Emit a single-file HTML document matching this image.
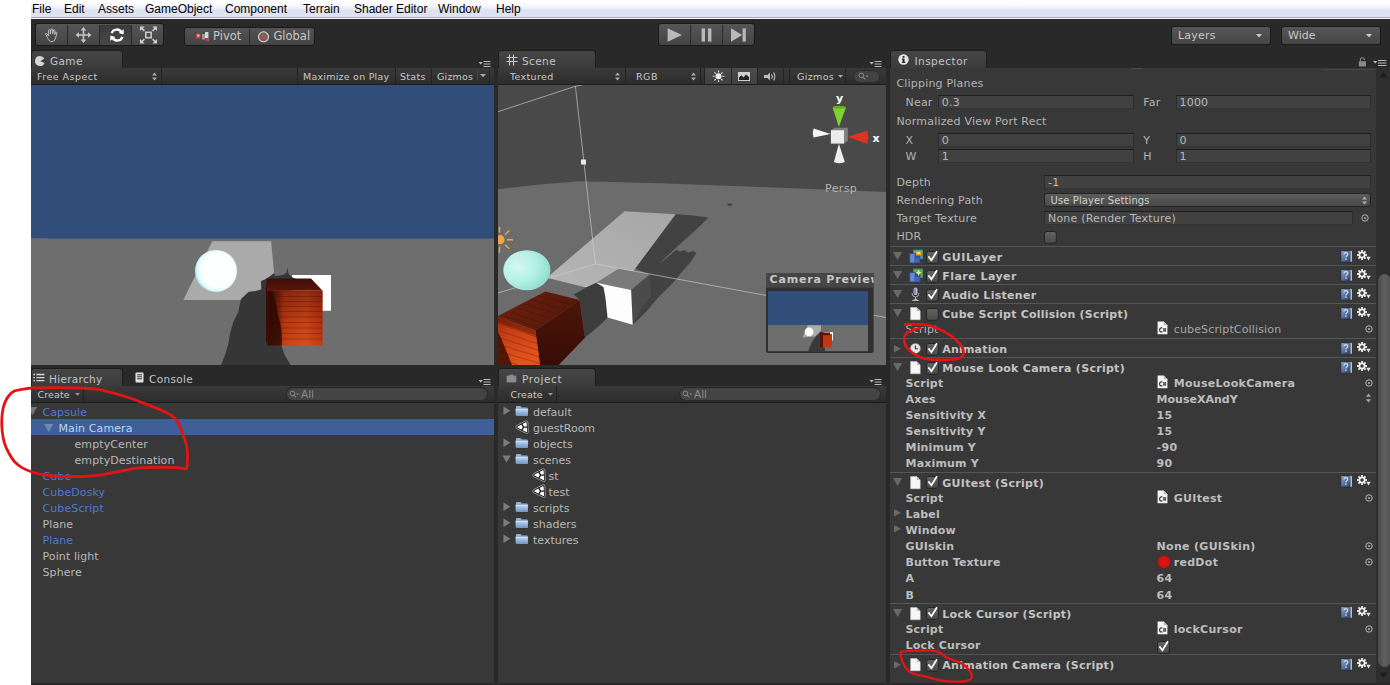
<!DOCTYPE html>
<html lang="en">
<head>
<meta charset="utf-8">
<title>Unity Editor</title>
<style>
*{box-sizing:border-box;margin:0;padding:0}
html,body{width:1390px;height:685px;overflow:hidden;background:#fff}
body{position:relative;font-family:"DejaVu Sans","Liberation Sans",sans-serif;font-size:11px;color:#b4b4b4;line-height:1}
.abs,.abs *{position:absolute}
.abs{position:absolute}
span.t,div.t{position:absolute;white-space:nowrap;line-height:16px;height:16px}
#insp>span.t{margin-top:1px}
#hier>span.t,#proj>span.t{margin-top:2px}
#insp>span.tt,#hier>span.tt,#proj>span.tt{margin-top:0}
#menubar{position:absolute;left:31px;top:0;width:1359px;height:19px;z-index:5;background:linear-gradient(#ffffff 0px,#fbfbfe 4px,#eef0f8 8px,#dee2f0 10px,#dfe3f1 16.5px,#a4a8ba 17px,#a4a8ba 18px,#f6f7fb 18px,#f6f7fb 19px);font-family:"Liberation Sans",sans-serif;font-size:12px;color:#000}
#menubar span{position:absolute;top:2px;line-height:15px;white-space:nowrap}
#unity{position:absolute;left:31px;top:18px;width:1359px;height:667px;background:#292929}
/* generic panel */
.panel{position:absolute;background:#383838}
.tab{position:absolute;margin-top:-1px;height:19px;background:linear-gradient(#454545,#3b3b3b);border:1px solid #1e1e1e;border-bottom:none;border-radius:3px 3px 0 0;color:#c4c4c4;font-size:11.5px}
.tab.inactive{background:none;border-color:transparent}
.ptool{position:absolute;height:17px;background:linear-gradient(#3a3a3a,#2c2c2c);border-bottom:1px solid #1c1c1c;font-size:9.5px;color:#c8c8c8}
.ptool .t{line-height:15px;height:15px;top:1px}
.vsep{position:absolute;width:1px;top:0;height:16px;background:#232323}
.btn{position:absolute;background:linear-gradient(#555,#424242);border:1px solid #1a1a1a;border-radius:3px}
.field{position:absolute;height:14px;background:#414141;border:1px solid #2c2c2c;border-top:1px solid #1e1e1e;border-bottom-color:#343434;color:#b8b8b8;font-size:11px}
.field span{position:absolute;left:3px;top:0;line-height:14px;white-space:nowrap;letter-spacing:.2px}
.sepline{position:absolute;left:0;height:1px;background:#555}
.b{font-weight:bold}
</style>
</head>
<body>
<div id="menubar">
<span style="left:1px">File</span>
<span style="left:33px">Edit</span>
<span style="left:67px">Assets</span>
<span style="left:114px">GameObject</span>
<span style="left:194px">Component</span>
<span style="left:272px">Terrain</span>
<span style="left:323px">Shader Editor</span>
<span style="left:407px">Window</span>
<span style="left:465px">Help</span>
</div>
<div id="unity">
<!--TOPBAR-->
<div class="abs" id="topbar" style="left:0;top:0;width:1359px;height:33px">
 <div class="btn" style="left:4px;top:5px;width:129px;height:23px;background:linear-gradient(#565656,#444)"></div>
 <div style="left:68px;top:7px;width:32px;height:20px;background:linear-gradient(#3a3a3a,#484848)"></div>
 <div style="left:36px;top:7px;width:1px;height:20px;background:#2a2a2a"></div>
 <div style="left:68px;top:7px;width:1px;height:20px;background:#2a2a2a"></div>
 <div style="left:100px;top:7px;width:1px;height:20px;background:#2a2a2a"></div>
 <svg style="left:5px;top:6px" width="127" height="22" viewBox="0 0 127 22" fill="none" stroke="#c8c8c8" stroke-width="1.2">
  <!-- hand -->
  <path d="M11.5 13.5 L9.6 10.2 Q9.4 8.9 10.8 9.6 L12.6 12 L12.6 6.2 Q13.4 5 14.2 6.2 L14.4 10 L15 5.2 Q15.9 4.2 16.6 5.4 L16.6 10 L17.6 6 Q18.6 5.2 19 6.6 L18.6 10.6 L19.8 8.2 Q20.9 7.8 20.8 9.2 L19.6 14 Q19 17.6 16 17.6 Q12.6 17.6 11.5 13.5 Z" stroke="#bdbdbd" stroke-width="1"/>
  <!-- move -->
  <g stroke="#c4c4c4" stroke-width="1.6"><path d="M47.5 5.5 V16.5 M42 11 H53"/></g>
  <g fill="#c4c4c4" stroke="none"><path d="M47.5 3 L50.3 6.4 H44.7 Z M47.5 19 L50.3 15.6 H44.7 Z M39.5 11 L43 8.2 V13.8 Z M55.5 11 L52 8.2 V13.8 Z"/></g>
  <!-- rotate -->
  <g stroke="#ffffff" stroke-width="2.3"><path d="M75.6 9.2 A5.4 5.4 0 0 1 85.4 8.2"/><path d="M86.4 12.8 A5.4 5.4 0 0 1 76.6 13.8"/></g>
  <g fill="#ffffff" stroke="none"><path d="M87.8 5.2 L87.6 10.4 L82.6 9 Z M74.2 16.8 L74.4 11.6 L79.4 13 Z"/></g>
  <!-- scale -->
  <g stroke="#cfcfcf" stroke-width="1.5"><rect x="109.8" y="8.3" width="5.4" height="5.4"/><path d="M105 3.5 L108.4 6.9 M120 3.5 L116.6 6.9 M105 18.5 L108.4 15.1 M120 18.5 L116.6 15.1"/></g>
  <g fill="#cfcfcf" stroke="none"><path d="M104 2.5 H108.6 L104 7.1 Z M121 2.5 H116.4 L121 7.1 Z M104 19.5 H108.6 L104 14.9 Z M121 19.5 H116.4 L121 14.9 Z"/></g>
 </svg>
 <!-- pivot/global -->
 <div class="btn" style="left:153px;top:9px;width:131px;height:19px;background:linear-gradient(#535353,#444)"></div>
 <div style="left:218px;top:11px;width:1px;height:16px;background:#2c2c2c"></div>
 <svg style="left:154px;top:10px" width="129" height="18" viewBox="0 0 129 18">
  <rect x="11" y="5.5" width="4.5" height="5" fill="#c74450"/><rect x="12.3" y="6.6" width="2" height="2" fill="#f4c8c8"/>
  <rect x="17" y="6" width="3" height="5.5" fill="#9a9a9a"/>
  <rect x="20" y="4" width="3.4" height="9" fill="#d8d8d8"/><rect x="20" y="10" width="3.4" height="3.2" fill="#d0303c"/>
  <circle cx="78.5" cy="8.8" r="5" fill="#6a6a6a" stroke="#d9d9d9" stroke-width="1.1"/><path d="M76.6 5.6 V11.6 H81" stroke="#d23a3a" stroke-width="1.5" fill="none"/><circle cx="79" cy="8.4" r="1.6" fill="#c84848"/>
 </svg>
 <span class="t" style="left:182px;top:10px;font-size:11.5px;color:#c6c6c6;line-height:17px">Pivot</span>
 <span class="t" style="left:242.4px;top:10px;font-size:11.5px;color:#c6c6c6;line-height:17px">Global</span>
 <!-- play -->
 <div class="btn" style="left:627px;top:5px;width:97px;height:23px;background:linear-gradient(#565656,#444)"></div>
 <div style="left:659px;top:7px;width:1px;height:20px;background:#2c2c2c"></div>
 <div style="left:691px;top:7px;width:1px;height:20px;background:#2c2c2c"></div>
 <svg style="left:628px;top:6px" width="95" height="22" viewBox="0 0 95 22" fill="#b9b9b9">
  <path d="M8.6 4.2 L23 11 L8.6 17.8 Z"/>
  <rect x="42.6" y="4.4" width="3.4" height="13.2"/><rect x="49" y="4.4" width="3.4" height="13.2"/>
  <path d="M72 4.2 L83.2 11 L72 17.8 Z"/><rect x="83.6" y="4.4" width="3.2" height="13.2"/>
 </svg>
 <!-- layers / wide -->
 <div class="btn" style="left:1140px;top:8px;width:100px;height:19px;background:linear-gradient(#565656,#454545);border-radius:3px"></div>
 <span class="t" style="left:1147px;top:10px;font-size:11px;color:#c8c8c8;line-height:16px;letter-spacing:.2px">Layers</span>
 <svg style="left:1225px;top:16px" width="7" height="4"><path d="M0 0 H6 L3 3.4 Z" fill="#c8c8c8"/></svg>
 <div class="btn" style="left:1250px;top:8px;width:100px;height:19px;background:linear-gradient(#565656,#454545);border-radius:3px"></div>
 <span class="t" style="left:1257px;top:10px;font-size:11px;color:#c8c8c8;line-height:16px;letter-spacing:0px">Wide</span>
 <svg style="left:1335px;top:16px" width="7" height="4"><path d="M0 0 H6 L3 3.4 Z" fill="#c8c8c8"/></svg>
</div>
<!--GAME-->
<div class="abs" id="game" style="left:0;top:33px;width:463px;height:314px">
 <div class="tab" style="left:0;top:0;width:92px"></div>
 <svg style="left:3px;top:3.5px" width="12" height="12" viewBox="0 0 12 12"><path d="M6 1 A5 5 0 1 0 10.6 8 L6.4 6.2 L10.4 3.6 A5 5 0 0 0 6 1 Z" fill="#d6d6d6"/></svg>
 <span class="t tt" style="left:19px;top:2px;font-size:10.5px;color:#c4c4c4;letter-spacing:0.4px">Game</span>
 <svg style="left:447px;top:9.6px" width="14" height="7" viewBox="0 0 13 7"><path d="M0 1 H4.4 L2.2 3.6 Z" fill="#bbb"/><path d="M5 .5 H12 M5 3 H12 M5 5.5 H12" stroke="#bbb" stroke-width="1"/></svg>
 <div class="ptool" style="left:0;top:17px;width:463px">
  <span class="t" style="left:6px;letter-spacing:.48px">Free Aspect</span>
  <svg style="left:121px;top:4px" width="5" height="9" viewBox="0 0 5 9" fill="#aaa"><path d="M0 3.4 L2.5 .4 L5 3.4 Z M0 5.4 L2.5 8.4 L5 5.4 Z"/></svg>
  <div class="vsep" style="left:130px"></div>
  <div class="vsep" style="left:266px"></div>
  <span class="t" style="left:272px;letter-spacing:.23px">Maximize on Play</span>
  <div class="vsep" style="left:364px"></div>
  <span class="t" style="left:369px;letter-spacing:.3px">Stats</span>
  <div class="vsep" style="left:400px"></div>
  <span class="t" style="left:406px;letter-spacing:.2px">Gizmos</span>
  <div class="vsep" style="left:446px;background:#4a4a4a;top:3px;height:9px"></div>
  <svg style="left:449px;top:6px" width="7" height="4"><path d="M0 0 H6 L3 3.2 Z" fill="#aaa"/></svg>
  <div class="vsep" style="left:458px"></div>
 </div>
 <svg style="left:0;top:34px" width="463" height="280" viewBox="31 85 463 280">
  <defs>
   <radialGradient id="gsph" cx=".55" cy=".48" r=".55"><stop offset="0" stop-color="#fff"/><stop offset=".72" stop-color="#fdffff"/><stop offset=".9" stop-color="#dffafa"/><stop offset="1" stop-color="#a8ecec"/></radialGradient>
   <linearGradient id="gcf" x1="0" x2="1" y1="0" y2="0"><stop offset="0" stop-color="#4e1206"/><stop offset=".18" stop-color="#7c1e0a"/><stop offset=".3" stop-color="#c23a12"/><stop offset=".7" stop-color="#d4481a"/><stop offset="1" stop-color="#b8300e"/></linearGradient>
   <linearGradient id="gcv" x1="0" x2="0" y1="0" y2="1"><stop offset="0" stop-color="#3a0c04" stop-opacity=".45"/><stop offset=".55" stop-color="#3a0c04" stop-opacity=".1"/><stop offset="1" stop-color="#ff7a30" stop-opacity=".12"/></linearGradient>
   <linearGradient id="gct" x1="0" x2="0" y1="0" y2="1"><stop offset="0" stop-color="#3c0d08"/><stop offset="1" stop-color="#5e150a"/></linearGradient>
  </defs>
  <rect x="31" y="85" width="463" height="154" fill="#314d7a"/>
  <rect x="31" y="238.6" width="463" height="127" fill="#6e6e6e"/>
  <path d="M31 238.6 L50 238.6 L31 240.4 Z" fill="#6e6e6e"/>
  <path d="M212.3 241.2 H271.1 L274.4 276 L266 279 L260 300 H183.3 Z" fill="#aaaaaa"/>
  <rect x="292" y="275" width="39" height="35.8" fill="#ffffff"/>
  <!-- shadow -->
  <path d="M274.2 273 L275.2 276 L283 275 L286.6 272.6 L287.5 267.4 L288.5 274 L292.6 277.4 L296 279 L266 279 L260.9 281 L261.3 289.3 L255.8 290.9 L248.7 291.7 L241.5 298.5 L240.5 300.5 L238.4 311.7 L233.3 322 L230.3 332.2 L228.2 344.4 L225.2 354.6 L221 365 L290.6 365 L284.4 354.6 L281.4 345.4 L268 338 L268 300 L266 279 Z" fill="#363636"/>
  <!-- cube -->
  <path d="M266 278.4 H311 L322.6 290.7 H267.5 Z" fill="url(#gct)"/>
  <path d="M266 278.4 L267.5 290.7 V345.4 L266 341 Z" fill="#3a0c05"/>
  <rect x="267.5" y="290.7" width="55.1" height="54.7" fill="url(#gcf)"/>
  <g stroke="#5a1406" stroke-width=".7" opacity=".55"><path d="M268 296.5 H322 M268 301.5 H322 M268 306.5 H322 M268 311.5 H322 M268 317 H322 M268 322.5 H322 M268 328 H322 M268 333.5 H322 M268 339 H322"/></g>
  <rect x="267.5" y="290.7" width="55.1" height="54.7" fill="url(#gcv)"/>
  <path d="M267.5 290.7 H272.6 L275.4 300 L277.4 312 L280 322 L281.6 332 L281.8 345.4 H267.5 Z" fill="#2a0903" opacity=".8"/>
  <circle cx="216" cy="270.9" r="21" fill="url(#gsph)"/>
 </svg>
</div>
<!--SCENE-->
<div class="abs" id="scene" style="left:467px;top:33px;width:388px;height:314px">
 <div class="tab" style="left:0;top:0;width:98px"></div>
 <svg style="left:8px;top:3px" width="12" height="12" viewBox="0 0 12 12"><path d="M3.5 .5 V11.5 M7.5 .5 V11.5 M.5 3.5 H11.5 M.5 7.5 H11.5" stroke="#c8c8c8" stroke-width="1.1" fill="none"/></svg>
 <span class="t tt" style="left:24px;top:2px;font-size:10.5px;color:#c4c4c4;letter-spacing:0.4px">Scene</span>
 <svg style="left:371px;top:9.6px" width="14" height="7" viewBox="0 0 13 7"><path d="M0 1 H4.4 L2.2 3.6 Z" fill="#bbb"/><path d="M5 .5 H12 M5 3 H12 M5 5.5 H12" stroke="#bbb" stroke-width="1"/></svg>
 <div class="ptool" style="left:0;top:17px;width:388px">
  <span class="t" style="left:12px;letter-spacing:.35px">Textured</span>
  <svg style="left:117px;top:4px" width="5" height="9" viewBox="0 0 5 9" fill="#aaa"><path d="M0 3.4 L2.5 .4 L5 3.4 Z M0 5.4 L2.5 8.4 L5 5.4 Z"/></svg>
  <div class="vsep" style="left:127px"></div>
  <span class="t" style="left:138px;letter-spacing:.5px">RGB</span>
  <svg style="left:193px;top:4px" width="5" height="9" viewBox="0 0 5 9" fill="#aaa"><path d="M0 3.4 L2.5 .4 L5 3.4 Z M0 5.4 L2.5 8.4 L5 5.4 Z"/></svg>
  <div class="vsep" style="left:202px"></div>
  <div style="left:207px;top:0;width:52px;height:16px;background:linear-gradient(#4b4b4b,#404040)"></div>
  <div class="vsep" style="left:206px"></div>
  <div class="vsep" style="left:233px"></div>
  <div class="vsep" style="left:259px"></div>
  <div class="vsep" style="left:285px"></div>
  <div class="vsep" style="left:291px"></div>
  <svg style="left:207px;top:0" width="80" height="16" viewBox="0 0 80 16">
   <circle cx="13.5" cy="8.3" r="3" fill="#f0f0f0"/>
   <g stroke="#f0f0f0" stroke-width="1.1"><path d="M13.5 2.6 V4.4 M13.5 12.2 V14 M7.8 8.3 H9.6 M17.4 8.3 H19.2 M9.5 4.3 L10.8 5.6 M16.2 11 L17.5 12.3 M17.5 4.3 L16.2 5.6 M10.8 11 L9.5 12.3"/></g>
   <rect x="33" y="4" width="12" height="9" fill="#cfcfcf"/><path d="M34 12 V9.6 L36.4 7.2 L38.6 9.4 L41 6.6 L44 9 V12 Z" fill="#222"/>
   <path d="M59 7 L62.6 7 L65 4.6 V12.4 L62.6 10 L59 10 Z" fill="#bdbdbd"/><path d="M66.6 6.2 Q68.2 8.5 66.6 10.8 M68.6 4.6 Q71.2 8.5 68.6 12.4" stroke="#bdbdbd" stroke-width="1.1" fill="none"/>
  </svg>
  <span class="t" style="left:299px;letter-spacing:.35px">Gizmos</span>
  <svg style="left:340px;top:7px" width="6" height="4"><path d="M0 0 H5 L2.5 2.8 Z" fill="#aaa"/></svg>
  <div class="vsep" style="left:347px"></div>
  <div style="left:355px;top:2px;width:27px;height:13px;border-radius:7px;background:#424242;border:1px solid #2a2a2a"></div>
  <svg style="left:360px;top:4px" width="12" height="9" viewBox="0 0 12 9"><circle cx="3.4" cy="3.4" r="2.3" stroke="#8a8a8a" stroke-width="1" fill="none"/><path d="M5 5 L7 7.4" stroke="#8a8a8a" stroke-width="1.1"/><path d="M7.6 3.4 H10.6 L9.1 5.2 Z" fill="#8a8a8a"/></svg>
 </div>
 <svg style="left:0;top:34px" width="388" height="280" viewBox="498 85 388 280" font-family="DejaVu Sans, Liberation Sans, sans-serif">
  <defs>
   <radialGradient id="ssph" cx=".3" cy=".4" r=".78"><stop offset="0" stop-color="#d4f8f2"/><stop offset=".5" stop-color="#b4f0e6"/><stop offset=".85" stop-color="#96e0d2"/><stop offset="1" stop-color="#80ccc4"/></radialGradient>
   <linearGradient id="swl" x1="0" x2=".5" y1="0" y2="1"><stop offset="0" stop-color="#9a2a10"/><stop offset=".4" stop-color="#c84016"/><stop offset="1" stop-color="#e2541e"/></linearGradient>
   <linearGradient id="swr" x1="0" x2="0" y1="0" y2="1"><stop offset="0" stop-color="#4e150a"/><stop offset="1" stop-color="#360d05"/></linearGradient>
   <linearGradient id="swt" x1="0" x2="1" y1="0" y2="0"><stop offset="0" stop-color="#6a1f0e"/><stop offset="1" stop-color="#55180a"/></linearGradient>
   <linearGradient id="squad" x1="0" x2="1" y1="1" y2="0"><stop offset="0" stop-color="#b6b6b6"/><stop offset="1" stop-color="#a6a6a6"/></linearGradient>
   <linearGradient id="sbr" x1="0" x2="1" y1="0" y2="1"><stop offset="0" stop-color="#8a8a8a"/><stop offset="1" stop-color="#4e4e4e"/></linearGradient>
  </defs>
  <rect x="497" y="85" width="389" height="280" fill="#494949"/>
  <path d="M497 189.3 L540 184.4 L580 181.2 L660 183.2 L760 187 L886 192 V365 H497 Z" fill="#6c6c6c"/>
  <!-- quad shadow -->
  <path d="M675.6 214.3 L690.4 215.3 L708.3 217.4 L700.6 225.5 L690.4 234.7 L680.1 243.9 L669.9 253.5 L661.7 260.9 L658.7 263.4 L663.8 260.3 L669.9 255.2 L676.1 250.1 L680.1 251.5 L684.2 250.1 L688.3 252.7 L692.4 251.1 L696.5 252.7 L691.4 261.3 L682.2 271.5 L674 281.7 L665.8 289.9 L657.7 298.1 L647.4 310.4 L639.3 318.5 L632.7 324.7 L631.1 289.9 L649.5 274.6 L635.2 268.5 Z" fill="#424242"/>
  <path d="M631.1 289.9 L649.5 274.6 L651 296 L641 309 L632.7 324.7 Z" fill="#4b4b4b"/>
  <!-- light quad -->
  <path d="M624.6 211.2 L675.6 214.3 L635.2 268.5 L622 286 L596.3 283.6 L586.2 287.4 L546.8 277.8 Z" fill="url(#squad)"/>
  <!-- shadow between -->
  <path d="M573.8 294.4 L586.2 287.4 L596.3 282.8 L603.5 286.9 L605.5 298.1 L607.6 317.5 L600.4 324.7 L588.2 334.9 L585 337.7 L579.6 300 Z" fill="#3d3d3d"/>
  <!-- white box -->
  <path d="M596.3 282.8 L618.8 268.5 L649.5 274.6 L631.1 289.9 Z" fill="#7a7a7a"/>
  <path d="M596.3 282.8 L631.1 289.9 L632.7 324.7 L607.6 317.5 L605.5 298.1 L603.5 286.9 Z" fill="#fdfdfd"/>
  <!-- frustum lines -->
  <g stroke="#cfcfcf" stroke-width=".9" fill="none" opacity=".72"><path d="M497 112 L575.4 86.3 L595.4 264 L886 317.5 M595.4 264 L497 293.3 M575.4 86.3 L584 84.4"/></g>
  <rect x="581" y="159.5" width="5" height="5" fill="#e8e8e8"/>
  <ellipse cx="729.8" cy="204.6" rx="2.6" ry="1.1" fill="#3c3c3c"/>
  <!-- sphere -->
  <ellipse cx="526.9" cy="270.2" rx="23.6" ry="20" fill="url(#ssph)"/>
  <!-- wood cube -->
  <path d="M545.5 291.6 L579.6 300 L535.3 330.5 L497 316.4 Z" fill="url(#swt)"/>
  <g stroke="#3a0e06" stroke-width=".7" opacity=".45"><path d="M538 295.6 L572.6 304.8 M530.6 299.4 L565.6 309.6 M523 303.4 L558.6 314.4 M515.6 307.2 L551.6 319.2 M508 311 L544.6 324 M501 314.8 L539 327.8"/></g>
  <path d="M579.6 300 L585 337.7 L558.7 365 L540.1 365 L535.3 330.5 Z" fill="url(#swr)"/>
  <path d="M497 316.4 L535.3 330.5 L540.1 365 L497 365 Z" fill="url(#swl)"/>
  <g stroke="#7a200c" stroke-width=".8" opacity=".5"><path d="M497 323 L536.2 337 M497 330 L537.2 343.6 M497 337 L538.2 350.2 M497 344 L539.2 356.8 M497 351 L540 363.4 M497 358 L518 365"/></g>
  <path d="M497 316.4 L535.3 330.5 L536.1 336 L497 322 Z" fill="#5a1608" opacity=".55"/>
  <path d="M497 330 L501 338 L506 350 L512 365 L497 365 Z" fill="#3c0e05" opacity=".85"/>
  <!-- sun -->
  <circle cx="500" cy="239.7" r="4.6" fill="#f3a544"/>
  <g stroke="#f3a544" stroke-width="1.4"><path d="M507 239.7 H513 M505 234.7 L509.4 230.6 M505 244.7 L509.4 248.8 M499.5 232.6 V227 M499.5 246.8 V252.4"/></g>
  <!-- gizmo -->
  <path d="M832.6 107.4 Q839.3 104.6 846 107.4 L838.9 127 Z" fill="#7ed42f"/><ellipse cx="839.3" cy="107.2" rx="6.7" ry="1.4" fill="#5fae1f"/>
  <path d="M813.6 128.4 L830.5 134 L813.6 137.4 Q811.8 133 813.6 128.4 Z" fill="#f4f4f4"/>
  <path d="M867.4 130.8 L847.7 136.7 L867.4 144 Q869.2 137.4 867.4 130.8 Z" fill="#dc3322"/>
  <path d="M833.9 162 L838.9 143.8 L844.8 162 Q839.3 164.4 833.9 162 Z" fill="#f0f0f0"/>
  <path d="M830.9 130.2 L834.6 127.8 H847.8 V141 L844 143.6 Z" fill="#808080"/>
  <rect x="830.9" y="130.2" width="13.1" height="13.4" fill="#ececec"/>
  <text x="836" y="101.6" font-size="11" font-weight="bold" fill="#fff">y</text>
  <text x="872.4" y="142.2" font-size="11" font-weight="bold" fill="#fff">x</text>
  <text x="825" y="192" font-size="11" fill="#b4b4b4" letter-spacing=".4">Persp</text>
  <!-- camera preview -->
  <rect x="766" y="273" width="107.6" height="80" rx="2" fill="#303030"/>
  <rect x="766" y="273" width="107.6" height="14.6" fill="#464646"/>
  <svg x="766" y="273" width="107.6" height="15" viewBox="766 273 107.6 15"><text x="769.6" y="283.4" font-size="11" font-weight="bold" fill="#c6c6c6" letter-spacing=".8">Camera Preview</text></svg>
  <rect x="768" y="291.2" width="100" height="34" fill="#324e7b"/>
  <rect x="768" y="325" width="100" height="26.2" fill="#6e6e6e"/>
  <path d="M807.8 325.2 H821 V336 L802.4 337.4 Z" fill="#aaa"/>
  <path d="M816 336 L821 331 L824 334 L825 351.2 H808 L812 342 Z" fill="#3a3a3a"/>
  <rect x="824.4" y="332.2" width="8.6" height="8" fill="#fff"/>
  <rect x="820" y="334" width="12" height="13.4" fill="#c23812"/><rect x="820" y="332.6" width="10" height="2.6" fill="#5a150a"/><rect x="820" y="334" width="3" height="13.4" fill="#5a150a"/>
  <circle cx="809.1" cy="331.9" r="4.4" fill="#fafefe"/>
 </svg>
</div>
<!--HIER-->
<div class="abs" id="hier" style="left:0;top:351px;width:463px;height:314px;background:#383838">
 <div style="left:0;top:0;width:463px;height:17px;background:#292929"></div>
 <div class="tab" style="left:0;top:0;width:92px"></div>
 <svg style="left:2px;top:4px" width="12" height="10" viewBox="0 0 12 10"><path d="M3.4 1.5 H11.4 M3.4 4.6 H11.4 M3.4 7.7 H11.4" stroke="#d6d6d6" stroke-width="1.3"/><path d="M.4 1.5 H2 M.4 4.6 H2 M.4 7.7 H2" stroke="#d6d6d6" stroke-width="1.3"/></svg>
 <span class="t tt" style="left:18px;top:2px;font-size:10.5px;color:#c4c4c4;letter-spacing:0.3px">Hierarchy</span>
 <svg style="left:104px;top:3px" width="9" height="11" viewBox="0 0 9 11"><rect x=".5" y=".5" width="8" height="10" rx="1" fill="#e4e4e4"/><path d="M2 2.8 H7 M2 4.8 H7 M2 6.8 H7" stroke="#333" stroke-width="1"/></svg>
 <span class="t tt" style="left:118px;top:2px;font-size:10.5px;color:#c4c4c4;letter-spacing:0.33px">Console</span>
 <svg style="left:447px;top:9.6px" width="14" height="7" viewBox="0 0 13 7"><path d="M0 1 H4.4 L2.2 3.6 Z" fill="#bbb"/><path d="M5 .5 H12 M5 3 H12 M5 5.5 H12" stroke="#bbb" stroke-width="1"/></svg>
 <div class="ptool" style="left:0;top:17px;width:463px">
  <span class="t" style="left:6.5px;letter-spacing:.1px">Create</span>
  <svg style="left:44px;top:7px" width="6" height="4"><path d="M0 0 H5 L2.5 2.8 Z" fill="#999"/></svg>
  <div class="vsep" style="left:52px"></div>
  <div style="left:255px;top:1.4px;width:202px;height:13.4px;border-radius:7px;background:#444;border:1px solid #2a2a2a;border-top-color:#232323"></div>
  <svg style="left:258px;top:4px" width="12" height="9" viewBox="0 0 12 9"><circle cx="3.4" cy="3.4" r="2.3" stroke="#8a8a8a" stroke-width="1" fill="none"/><path d="M5 5 L7 7.4" stroke="#8a8a8a" stroke-width="1.1"/><path d="M7.2 3.4 H10.2 L8.7 5.2 Z" fill="#8a8a8a"/></svg>
  <span class="t" style="left:270px;color:#8c8c8c;font-size:10.5px">All</span>
 </div>
 <div style="left:0;top:50px;width:463px;height:16px;background:#3e5f99"></div>
 <svg style="left:0;top:38.2px" width="8" height="9"><path d="M-3.4 0 H6.2 L1.4 8.2 Z" fill="#757575"/></svg>
 <svg style="left:13px;top:54.6px" width="10" height="9"><path d="M0 0 H9.4 L4.7 8.2 Z" fill="#6e88b4"/></svg>
 <span class="t" style="left:11.5px;top:34px;color:#4c7ad4;letter-spacing:.1px">Capsule</span>
 <span class="t" style="left:27.5px;top:50px;color:#bcd6f6;letter-spacing:.1px">Main Camera</span>
 <span class="t" style="left:43.5px;top:66px;color:#b9b9b9;letter-spacing:.1px">emptyCenter</span>
 <span class="t" style="left:43.5px;top:82px;color:#b9b9b9;letter-spacing:.1px">emptyDestination</span>
 <span class="t" style="left:11.5px;top:98px;color:#4c7ad4;letter-spacing:.1px">Cube</span>
 <span class="t" style="left:11.5px;top:114px;color:#4c7ad4;letter-spacing:.1px">CubeDosky</span>
 <span class="t" style="left:11.5px;top:130px;color:#4c7ad4;letter-spacing:.1px">CubeScript</span>
 <span class="t" style="left:11.5px;top:146px;color:#b9b9b9;letter-spacing:.1px">Plane</span>
 <span class="t" style="left:11.5px;top:162px;color:#4c7ad4;letter-spacing:.1px">Plane</span>
 <span class="t" style="left:11.5px;top:178px;color:#b9b9b9;letter-spacing:.1px">Point light</span>
 <span class="t" style="left:11.5px;top:194px;color:#b9b9b9;letter-spacing:.1px">Sphere</span>
</div>
<!--PROJ-->
<div class="abs" id="proj" style="left:467px;top:351px;width:388px;height:314px;background:#383838">
 <div style="left:0;top:0;width:388px;height:17px;background:#292929"></div>
 <div class="tab" style="left:0;top:0;width:98px"></div>
 <svg style="left:8px;top:5px" width="11" height="9" viewBox="0 0 11 9"><path d="M.5 2.4 Q.5 1.6 1.3 1.6 H3 L4 .6 H7 L7.8 1.6 H9.6 Q10.4 1.6 10.4 2.4 V7.8 Q10.4 8.5 9.6 8.5 H1.3 Q.5 8.5 .5 7.8 Z" fill="#8c8c8c" stroke="#555" stroke-width=".6"/></svg>
 <span class="t tt" style="left:24px;top:2px;font-size:10.5px;color:#c4c4c4;letter-spacing:0.6px">Project</span>
 <svg style="left:371px;top:9.6px" width="14" height="7" viewBox="0 0 13 7"><path d="M0 1 H4.4 L2.2 3.6 Z" fill="#bbb"/><path d="M5 .5 H12 M5 3 H12 M5 5.5 H12" stroke="#bbb" stroke-width="1"/></svg>
 <div class="ptool" style="left:0;top:17px;width:388px">
  <span class="t" style="left:12.5px;letter-spacing:.1px">Create</span>
  <svg style="left:50px;top:7px" width="6" height="4"><path d="M0 0 H5 L2.5 2.8 Z" fill="#999"/></svg>
  <div class="vsep" style="left:58px"></div>
  <div style="left:181px;top:1.4px;width:202px;height:13.4px;border-radius:7px;background:#444;border:1px solid #2a2a2a;border-top-color:#232323"></div>
  <svg style="left:184px;top:4px" width="12" height="9" viewBox="0 0 12 9"><circle cx="3.4" cy="3.4" r="2.3" stroke="#8a8a8a" stroke-width="1" fill="none"/><path d="M5 5 L7 7.4" stroke="#8a8a8a" stroke-width="1.1"/><path d="M7.2 3.4 H10.2 L8.7 5.2 Z" fill="#8a8a8a"/></svg>
  <span class="t" style="left:196px;color:#8c8c8c;font-size:10.5px">All</span>
 </div>
 <svg width="0" height="0" style="left:0;top:0"><defs>
  <linearGradient id="fold" x1="0" x2="0" y1="0" y2="1"><stop offset="0" stop-color="#bcd2ee"/><stop offset="1" stop-color="#6f92c2"/></linearGradient>
  <g id="ifold"><path d="M.9 2.4 Q.9 1 2.3 1 H5 Q5.8 1 6.2 1.8 L6.6 2.6 H11.8 Q12.8 2.6 12.8 3.6 V10.6 H.9 Z" fill="#8fb0da"/><path d="M.5 4.2 H13.2 L12.8 10.2 Q12.8 11 12 11 H1.7 Q.9 11 .9 10.2 Z" fill="url(#fold)"/><path d="M.8 4.6 H13" stroke="#e2edfa" stroke-width=".7"/></g>
  <g id="iunity"><path d="M.8 7.1 Q.8 6 1.9 5.4 L10.6 .9 Q12.6 .1 12.9 2.1 L13.3 12 Q13.2 14.1 11.2 13.3 L1.9 8.8 Q.8 8.2 .8 7.1 Z" fill="#1e1e1e" stroke="#bdbdbd" stroke-width=".7"/><path d="M3 7.1 L11 2.8 L11.5 11.5 Z" fill="#fafafa" stroke="#fafafa" stroke-width="1.2" stroke-linejoin="round"/><path d="M8.6 7.1 H12.4 M8.6 7.1 L6.6 3.6 M8.6 7.1 L6.6 10.6" stroke="#1e1e1e" stroke-width="1.3"/><path d="M8.6 7.1 L5.6 7.1" stroke="#1e1e1e" stroke-width="0"/></g>
 </defs></svg>
 <svg style="left:5px;top:37px" width="8" height="10"><path d="M.5 .6 L7.4 4.8 L.5 9 Z" fill="#7c7c7c"/></svg>
 <svg style="left:17.0px;top:36px" width="14" height="12" viewBox="0 0 14 12"><use href="#ifold"/></svg>
 <span class="t" style="left:35.0px;top:34px;color:#b9b9b9;letter-spacing:0px">default</span>
 <svg style="left:17.0px;top:51px" width="14" height="14" viewBox="0 0 14 14"><use href="#iunity"/></svg>
 <span class="t" style="left:35.0px;top:50px;color:#b9b9b9;letter-spacing:0px">guestRoom</span>
 <svg style="left:5px;top:69px" width="8" height="10"><path d="M.5 .6 L7.4 4.8 L.5 9 Z" fill="#7c7c7c"/></svg>
 <svg style="left:17.0px;top:68px" width="14" height="12" viewBox="0 0 14 12"><use href="#ifold"/></svg>
 <span class="t" style="left:35.0px;top:66px;color:#b9b9b9;letter-spacing:0px">objects</span>
 <svg style="left:4px;top:86px" width="10" height="8"><path d="M.4 .5 H8.8 L4.6 7.4 Z" fill="#7c7c7c"/></svg>
 <svg style="left:17.0px;top:84px" width="14" height="12" viewBox="0 0 14 12"><use href="#ifold"/></svg>
 <span class="t" style="left:35.0px;top:82px;color:#b9b9b9;letter-spacing:0px">scenes</span>
 <svg style="left:33.5px;top:99px" width="14" height="14" viewBox="0 0 14 14"><use href="#iunity"/></svg>
 <span class="t" style="left:50.5px;top:98px;color:#b9b9b9;letter-spacing:0px">st</span>
 <svg style="left:33.5px;top:115px" width="14" height="14" viewBox="0 0 14 14"><use href="#iunity"/></svg>
 <span class="t" style="left:50.5px;top:114px;color:#b9b9b9;letter-spacing:0px">test</span>
 <svg style="left:5px;top:133px" width="8" height="10"><path d="M.5 .6 L7.4 4.8 L.5 9 Z" fill="#7c7c7c"/></svg>
 <svg style="left:17.0px;top:132px" width="14" height="12" viewBox="0 0 14 12"><use href="#ifold"/></svg>
 <span class="t" style="left:35.0px;top:130px;color:#b9b9b9;letter-spacing:0px">scripts</span>
 <svg style="left:5px;top:149px" width="8" height="10"><path d="M.5 .6 L7.4 4.8 L.5 9 Z" fill="#7c7c7c"/></svg>
 <svg style="left:17.0px;top:148px" width="14" height="12" viewBox="0 0 14 12"><use href="#ifold"/></svg>
 <span class="t" style="left:35.0px;top:146px;color:#b9b9b9;letter-spacing:0px">shaders</span>
 <svg style="left:5px;top:165px" width="8" height="10"><path d="M.5 .6 L7.4 4.8 L.5 9 Z" fill="#7c7c7c"/></svg>
 <svg style="left:17.0px;top:164px" width="14" height="12" viewBox="0 0 14 12"><use href="#ifold"/></svg>
 <span class="t" style="left:35.0px;top:162px;color:#b9b9b9;letter-spacing:0px">textures</span>
</div>
<!--INSP-->
<div class="abs" id="insp" style="left:859px;top:33px;width:500px;height:632px">
 <div class="tab" style="left:0;top:0;width:97px"></div>
 <svg style="left:8px;top:3px" width="11" height="11" viewBox="0 0 11 11"><circle cx="5.5" cy="5.5" r="5.2" fill="#e6e6e6"/><rect x="4.6" y="4.6" width="1.9" height="4" fill="#222"/><rect x="3.8" y="4.6" width="2" height="1" fill="#222"/><rect x="3.8" y="7.8" width="3.6" height="1" fill="#222"/><rect x="4.6" y="2" width="1.9" height="1.7" fill="#222"/></svg>
 <span class="t tt" style="left:24.4px;top:2px;font-size:10.5px;color:#c4c4c4;letter-spacing:.5px">Inspector</span>
 <svg style="left:468px;top:6px" width="9" height="10" viewBox="0 0 9 10"><path d="M2.4 4.4 V2.8 Q2.4 .8 4.4 .8 Q6.4 .8 6.4 2.8 V3.2" stroke="#8a8a8a" stroke-width="1.1" fill="none"/><rect x=".8" y="4.2" width="7.2" height="5.2" rx=".6" fill="#8a8a8a"/></svg>
 <svg style="left:483px;top:9px" width="14" height="7" viewBox="0 0 14 7"><path d="M0 1 H4.4 L2.2 3.6 Z" fill="#bbb"/><path d="M5 .5 H13.4 M5 3 H13.4 M5 5.5 H13.4" stroke="#bbb" stroke-width="1"/></svg>
 <div style="left:0;top:17px;width:500px;height:615px;background:#383838"></div>
 <div style="left:241px;top:17px;width:11px;height:1px;background:#484848"></div>
 <div style="left:434px;top:17.6px;width:51px;height:1.6px;background:#474747"></div>
 <div style="left:486px;top:17px;width:14px;height:615px;background:#2e2e2e"></div>
 <div style="left:487.6px;top:222.5px;width:13px;height:393px;border-radius:6.5px;background:linear-gradient(90deg,#494949,#5e5e5e 45%,#585858 80%,#505050);"></div>
 <svg style="left:489px;top:21px" width="9" height="6"><path d="M4.5 .4 L8.6 5.4 H.4 Z" fill="#1c1c1c"/></svg>
 <svg style="left:489px;top:621px" width="9" height="6"><path d="M4.5 5.6 L8.6 .6 H.4 Z" fill="#1c1c1c"/></svg>
 <svg width="0" height="0" style="left:0;top:0"><defs>
  <linearGradient id="hb" x1="0" x2="1" y1="0" y2="1"><stop offset="0" stop-color="#92a8cc"/><stop offset=".5" stop-color="#58749f"/><stop offset="1" stop-color="#2c426c"/></linearGradient>
  <linearGradient id="cbg" x1="0" x2="0" y1="0" y2="1"><stop offset="0" stop-color="#626262"/><stop offset="1" stop-color="#4a4a4a"/></linearGradient>
  <g id="ihelp"><path d="M.6 .9 L10.2 .2 L12 .9 V11.6 L10.4 12.2 H.6 Z" fill="#1f2a40"/><path d="M10.4 .6 L11.8 1.2 V11.4 L10.4 11.9 Z" fill="#e4ebf6"/><rect x="1.3" y="1.1" width="9" height="10.6" fill="url(#hb)"/><path d="M4 4.4 Q4 2.6 5.9 2.6 Q7.8 2.6 7.8 4.3 Q7.8 5.4 6.6 6 Q5.9 6.4 5.9 7.4" stroke="#d2dcee" stroke-width="1.2" fill="none"/><rect x="5.2" y="8.4" width="1.4" height="1.5" fill="#d2dcee"/></g>
  <g id="igear"><g fill="#ececec"><circle cx="5" cy="5" r="3.5"/><g id="tooth"><rect x="4.1" y="0" width="1.8" height="10"/></g><rect x="0" y="4.1" width="10" height="1.8"/><rect x="4.1" y="0" width="1.8" height="10" transform="rotate(45 5 5)"/><rect x="4.1" y="0" width="1.8" height="10" transform="rotate(-45 5 5)"/></g><circle cx="5" cy="5" r="1.7" fill="#383838"/><path d="M9.3 6.8 H13.7 L11.5 10.4 Z" fill="#e4e4e4"/></g>
  <g id="icheckbox"><rect x=".5" y=".5" width="11.8" height="11.8" rx="2.2" fill="url(#cbg)" stroke="#242424" stroke-width="1"/></g>
  <g id="icheck"><path d="M2.4 5.4 L5.4 9.2 L11 .2" stroke="#fff" stroke-width="1.7" fill="none"/></g>
  <g id="idoc"><path d="M.6 .6 H6.8 L10.2 4 V12.8 H.6 Z" fill="#f6f6f6" stroke="#cfcfcf" stroke-width=".5"/><path d="M6.8 .6 V4 H10.2 Z" fill="#bdbdbd"/></g>
  <g id="ics"><path d="M.6 .6 H6.8 L10.4 4.2 V13.2 H.6 Z" fill="#f4f4f4"/><path d="M6.8 .6 V4.2 H10.4 Z" fill="#b8b8b8"/><path d="M5.4 7 Q2.6 6.4 2.6 9 Q2.6 11.4 5.4 10.8" stroke="#333" stroke-width="1.2" fill="none"/><path d="M6 8 H9.2 M6 9.8 H9.2 M6.9 7 V10.8 M8.3 7 V10.8" stroke="#333" stroke-width=".8"/></g>
  <g id="ipick"><circle cx="4" cy="4" r="3.2" stroke="#b4b4b4" stroke-width="1" fill="none"/><circle cx="4" cy="4" r="1" fill="#b4b4b4"/></g>
  <g id="itrid"><path d="M0 0 H9.2 L4.6 8 Z" fill="#696969"/></g>
  <g id="itrir"><path d="M0 0 L7 3.8 L0 7.6 Z" fill="#696969"/></g>
 </defs></svg>
 <span class="t" style="left:6.4px;top:24.3px;color:#b4b4b4;letter-spacing:0.2px;font-size:11px">Clipping Planes</span>
 <span class="t" style="left:15.5px;top:43.3px;color:#b4b4b4;letter-spacing:0.2px;font-size:11px">Near</span>
 <div class="field" style="left:47.8px;top:43.7px;width:196.4px;height:14.4px"><span>0.3</span></div>
 <span class="t" style="left:253.3px;top:43.3px;color:#b4b4b4;letter-spacing:0.2px;font-size:11px">Far</span>
 <div class="field" style="left:285.5px;top:43.7px;width:195.9px;height:14.4px"><span>1000</span></div>
 <span class="t" style="left:6.4px;top:61.9px;color:#b4b4b4;letter-spacing:0.2px;font-size:11px">Normalized View Port Rect</span>
 <span class="t" style="left:15.5px;top:80.9px;color:#b4b4b4;letter-spacing:0.2px;font-size:11px">X</span>
 <div class="field" style="left:47.8px;top:81.7px;width:196.4px;height:14.4px"><span>0</span></div>
 <span class="t" style="left:253.3px;top:80.9px;color:#b4b4b4;letter-spacing:0.2px;font-size:11px">Y</span>
 <div class="field" style="left:285.5px;top:81.7px;width:195.9px;height:14.4px"><span>0</span></div>
 <span class="t" style="left:15.5px;top:97.0px;color:#b4b4b4;letter-spacing:0.2px;font-size:11px">W</span>
 <div class="field" style="left:47.8px;top:97.8px;width:196.4px;height:14.3px"><span>1</span></div>
 <span class="t" style="left:253.3px;top:97.0px;color:#b4b4b4;letter-spacing:0.2px;font-size:11px">H</span>
 <div class="field" style="left:285.5px;top:97.8px;width:195.9px;height:14.3px"><span>1</span></div>
 <span class="t" style="left:6.4px;top:123.1px;color:#b4b4b4;letter-spacing:0.2px;font-size:11px">Depth</span>
 <div class="field" style="left:154px;top:124.4px;width:327.4px;height:14.0px"><span>-1</span></div>
 <span class="t" style="left:6.4px;top:141.1px;color:#b4b4b4;letter-spacing:0.2px;font-size:11px">Rendering Path</span>
 <div style="left:154px;top:142.1px;width:327.4px;height:14px;border-radius:3px;background:linear-gradient(#5c5c5c,#494949);border:1px solid #242424"></div>
 <span class="t" style="left:160.5px;top:141.2px;font-size:10px;color:#cfcfcf;letter-spacing:.1px">Use Player Settings</span>
 <svg style="left:471.6px;top:145.4px" width="5" height="9" viewBox="0 0 5 9" fill="#b0b0b0"><path d="M0 3.4 L2.5 .4 L5 3.4 Z M0 5.4 L2.5 8.4 L5 5.4 Z"/></svg>
 <span class="t" style="left:6.4px;top:158.8px;color:#b4b4b4;letter-spacing:0.2px;font-size:11px">Target Texture</span>
 <div class="field" style="left:154px;top:160.1px;width:309px;height:13.8px"><span>None (Render Texture)</span></div>
 <svg style="left:471.3px;top:162.6px" width="8" height="8"><use href="#ipick"/></svg>
 <span class="t" style="left:6.4px;top:176.8px;color:#b4b4b4;letter-spacing:0.2px;font-size:11px">HDR</span>
 <svg style="left:154px;top:180px" width="13" height="13"><use href="#icheckbox"/></svg>
 <div class="sepline" style="top:195.0px;width:486px"></div>
 <svg style="left:3.2px;top:201.3px" width="10" height="9"><use href="#itrid"/></svg>
 <svg style="left:18.6px;top:198.1px" width="15" height="15" viewBox="0 0 15 15"><rect x="4" y=".6" width="10" height="9.4" fill="#3f8f78"/><rect x="4.8" y="1.4" width="8.4" height="7.8" fill="#58a890"/><rect x=".4" y="4.2" width="11" height="10" fill="#3050a0"/><rect x="1.2" y="5" width="4.4" height="8.4" fill="#6a8ad0"/><rect x="5.6" y="9" width="5" height="4.4" fill="#4464b4"/><rect x="7" y="2.4" width="5" height="4" fill="#e8a820"/><rect x="8" y="3" width="3" height="2" fill="#f8e060"/></svg>
 <svg style="left:36.2px;top:196.7px;overflow:visible" width="13" height="16" viewBox="0 -3 13 16"><use href="#icheckbox"/><use href="#icheck"/></svg>
 <span class="t b" style="left:52.3px;top:198.2px;color:#c3c3c3;letter-spacing:0.54px;font-size:11px">GUILayer</span>
 <svg style="left:449.5px;top:198.9px" width="13" height="13"><use href="#ihelp"/></svg>
 <svg style="left:467.2px;top:198.9px" width="14" height="11"><use href="#igear"/></svg>
 <div class="sepline" style="top:214.0px;width:486px"></div>
 <svg style="left:3.2px;top:220.3px" width="10" height="9"><use href="#itrid"/></svg>
 <svg style="left:18.6px;top:217.1px" width="15" height="15" viewBox="0 0 15 15"><rect x="4" y=".6" width="10" height="9.4" fill="#3f8f58"/><rect x="4.8" y="1.4" width="8.4" height="7.8" fill="#58a870"/><rect x=".4" y="4.2" width="11" height="10" fill="#3050a0"/><rect x="1.2" y="5" width="4.4" height="8.4" fill="#6a8ad0"/><rect x="5.6" y="9" width="5" height="4.4" fill="#4464b4"/><path d="M9.6 1.6 L10.6 3.8 L12.8 4.8 L10.6 5.8 L9.6 8 L8.6 5.8 L6.4 4.8 L8.6 3.8 Z" fill="#f0f060"/></svg>
 <svg style="left:36.2px;top:215.7px;overflow:visible" width="13" height="16" viewBox="0 -3 13 16"><use href="#icheckbox"/><use href="#icheck"/></svg>
 <span class="t b" style="left:52.3px;top:217.2px;color:#c3c3c3;letter-spacing:0.45px;font-size:11px">Flare Layer</span>
 <svg style="left:449.5px;top:217.9px" width="13" height="13"><use href="#ihelp"/></svg>
 <svg style="left:467.2px;top:217.9px" width="14" height="11"><use href="#igear"/></svg>
 <div class="sepline" style="top:233.0px;width:486px"></div>
 <svg style="left:3.2px;top:239.3px" width="10" height="9"><use href="#itrid"/></svg>
 <svg style="left:18.6px;top:236.1px" width="15" height="15" viewBox="0 0 15 15"><rect x="4.6" y=".6" width="3.8" height="7.4" rx="1.9" fill="#c8ccd8"/><rect x="5.4" y="1.4" width="1.4" height="5.6" fill="#6878a8"/><path d="M3 6 Q3 10 6.5 10 Q10 10 10 6" stroke="#a8a8a8" stroke-width="1" fill="none"/><rect x="6" y="10" width="1.2" height="2" fill="#a8a8a8"/><path d="M2.4 14 L6.5 11.4 L10.6 14 Z" fill="#b8b8b8"/></svg>
 <svg style="left:36.2px;top:234.7px;overflow:visible" width="13" height="16" viewBox="0 -3 13 16"><use href="#icheckbox"/><use href="#icheck"/></svg>
 <span class="t b" style="left:52.3px;top:236.2px;color:#c3c3c3;letter-spacing:0.28px;font-size:11px">Audio Listener</span>
 <svg style="left:449.5px;top:236.9px" width="13" height="13"><use href="#ihelp"/></svg>
 <svg style="left:467.2px;top:236.9px" width="14" height="11"><use href="#igear"/></svg>
 <div class="sepline" style="top:252.0px;width:486px"></div>
 <svg style="left:3.2px;top:258.3px" width="10" height="9"><use href="#itrid"/></svg>
 <svg style="left:18.6px;top:255.1px" width="15" height="15" viewBox="0 0 15 15"><g transform="translate(1,1)"><use href="#idoc"/></g></svg>
 <svg style="left:36.2px;top:253.7px;overflow:visible" width="13" height="16" viewBox="0 -3 13 16"><use href="#icheckbox"/></svg>
 <span class="t b" style="left:52.3px;top:255.2px;color:#c3c3c3;letter-spacing:0.23px;font-size:11px">Cube Script Collision (Script)</span>
 <svg style="left:449.5px;top:255.9px" width="13" height="13"><use href="#ihelp"/></svg>
 <svg style="left:467.2px;top:255.9px" width="14" height="11"><use href="#igear"/></svg>
 <span class="t" style="left:15.5px;top:269.8px;color:#b4b4b4;letter-spacing:0.2px;font-size:11px">Script</span>
 <svg style="left:267.4px;top:269.8px" width="11" height="14"><use href="#ics"/></svg>
 <span class="t" style="left:283.7px;top:270.4px;color:#a6a6a6;letter-spacing:0.15px;font-size:11px">cubeScriptCollision</span>
 <svg style="left:474.6px;top:274.4px" width="8" height="8"><use href="#ipick"/></svg>
 <div class="sepline" style="top:287.0px;width:486px"></div>
 <svg style="left:4.2px;top:293.5px" width="8" height="9"><use href="#itrir"/></svg>
 <svg style="left:18.6px;top:290.1px" width="15" height="15" viewBox="0 0 15 15"><circle cx="6.4" cy="7.4" r="5" fill="#e6e6e6" stroke="#8a8a8a" stroke-width=".6"/><path d="M6.4 4.4 V7.8 H9" stroke="#333" stroke-width="1.1" fill="none"/></svg>
 <svg style="left:36.2px;top:288.7px;overflow:visible" width="13" height="16" viewBox="0 -3 13 16"><use href="#icheckbox"/><use href="#icheck"/></svg>
 <span class="t b" style="left:52.3px;top:290.2px;color:#c3c3c3;letter-spacing:0.18px;font-size:11px">Animation</span>
 <svg style="left:449.5px;top:290.9px" width="13" height="13"><use href="#ihelp"/></svg>
 <svg style="left:467.2px;top:290.9px" width="14" height="11"><use href="#igear"/></svg>
 <div class="sepline" style="top:306.0px;width:486px"></div>
 <svg style="left:3.2px;top:312.3px" width="10" height="9"><use href="#itrid"/></svg>
 <svg style="left:18.6px;top:309.1px" width="15" height="15" viewBox="0 0 15 15"><g transform="translate(1,1)"><use href="#idoc"/></g></svg>
 <svg style="left:36.2px;top:307.7px;overflow:visible" width="13" height="16" viewBox="0 -3 13 16"><use href="#icheckbox"/><use href="#icheck"/></svg>
 <span class="t b" style="left:52.3px;top:309.2px;color:#c3c3c3;letter-spacing:0.28px;font-size:11px">Mouse Look Camera (Script)</span>
 <svg style="left:449.5px;top:309.9px" width="13" height="13"><use href="#ihelp"/></svg>
 <svg style="left:467.2px;top:309.9px" width="14" height="11"><use href="#igear"/></svg>
 <span class="t b" style="left:15.5px;top:324.2px;color:#bdbdbd;letter-spacing:0.18px;font-size:11px">Script</span>
 <svg style="left:267.4px;top:323.6px" width="11" height="14"><use href="#ics"/></svg>
 <span class="t b" style="left:283.7px;top:324.2px;color:#bdbdbd;letter-spacing:0.3px;font-size:11px">MouseLookCamera</span>
 <svg style="left:474.6px;top:328.2px" width="8" height="8"><use href="#ipick"/></svg>
 <span class="t b" style="left:15.5px;top:340.0px;color:#bdbdbd;letter-spacing:0.18px;font-size:11px">Axes</span>
 <span class="t b" style="left:266.6px;top:340.0px;color:#bdbdbd;letter-spacing:0px;font-size:11px">MouseXAndY</span>
 <svg style="left:476.2px;top:341.6px" width="5" height="10" viewBox="0 0 5 10" fill="#a8a8a8"><path d="M0 3.8 L2.5 .4 L5 3.8 Z M0 6.2 L2.5 9.6 L5 6.2 Z"/></svg>
 <span class="t b" style="left:15.5px;top:356.0px;color:#bdbdbd;letter-spacing:0.18px;font-size:11px">Sensitivity X</span>
 <span class="t b" style="left:266.6px;top:356.0px;color:#bdbdbd;letter-spacing:0.3px;font-size:11px">15</span>
 <span class="t b" style="left:15.5px;top:372.0px;color:#bdbdbd;letter-spacing:0.18px;font-size:11px">Sensitivity Y</span>
 <span class="t b" style="left:266.6px;top:372.0px;color:#bdbdbd;letter-spacing:0.3px;font-size:11px">15</span>
 <span class="t b" style="left:15.5px;top:388.0px;color:#bdbdbd;letter-spacing:0.18px;font-size:11px">Minimum Y</span>
 <span class="t b" style="left:266.6px;top:388.0px;color:#bdbdbd;letter-spacing:0.3px;font-size:11px">-90</span>
 <span class="t b" style="left:15.5px;top:404.0px;color:#bdbdbd;letter-spacing:0.18px;font-size:11px">Maximum Y</span>
 <span class="t b" style="left:266.6px;top:404.0px;color:#bdbdbd;letter-spacing:0.3px;font-size:11px">90</span>
 <div class="sepline" style="top:420.5px;width:486px"></div>
 <svg style="left:3.2px;top:426.8px" width="10" height="9"><use href="#itrid"/></svg>
 <svg style="left:18.6px;top:423.6px" width="15" height="15" viewBox="0 0 15 15"><g transform="translate(1,1)"><use href="#idoc"/></g></svg>
 <svg style="left:36.2px;top:422.2px;overflow:visible" width="13" height="16" viewBox="0 -3 13 16"><use href="#icheckbox"/><use href="#icheck"/></svg>
 <span class="t b" style="left:52.3px;top:423.7px;color:#c3c3c3;letter-spacing:0.28px;font-size:11px">GUItest (Script)</span>
 <svg style="left:449.5px;top:424.4px" width="13" height="13"><use href="#ihelp"/></svg>
 <svg style="left:467.2px;top:424.4px" width="14" height="11"><use href="#igear"/></svg>
 <span class="t b" style="left:15.5px;top:439.4px;color:#bdbdbd;letter-spacing:0.18px;font-size:11px">Script</span>
 <svg style="left:267.4px;top:438.8px" width="11" height="14"><use href="#ics"/></svg>
 <span class="t b" style="left:283.7px;top:439.4px;color:#bdbdbd;letter-spacing:0.3px;font-size:11px">GUItest</span>
 <svg style="left:474.6px;top:443.4px" width="8" height="8"><use href="#ipick"/></svg>
 <svg style="left:4.2px;top:458.4px" width="8" height="9"><use href="#itrir"/></svg>
 <span class="t b" style="left:15.5px;top:455.2px;color:#bdbdbd;letter-spacing:0.18px;font-size:11px">Label</span>
 <svg style="left:4.2px;top:474.4px" width="8" height="9"><use href="#itrir"/></svg>
 <span class="t b" style="left:15.5px;top:471.2px;color:#bdbdbd;letter-spacing:0.18px;font-size:11px">Window</span>
 <span class="t b" style="left:15.5px;top:487.2px;color:#bdbdbd;letter-spacing:0.18px;font-size:11px">GUIskin</span>
 <span class="t b" style="left:266.6px;top:487.2px;color:#bdbdbd;letter-spacing:0.3px;font-size:11px">None (GUISkin)</span>
 <svg style="left:474.6px;top:491.2px" width="8" height="8"><use href="#ipick"/></svg>
 <span class="t b" style="left:15.5px;top:503.0px;color:#bdbdbd;letter-spacing:0.18px;font-size:11px">Button Texture</span>
 <span class="t b" style="left:283.7px;top:503.0px;color:#bdbdbd;letter-spacing:0.3px;font-size:11px">redDot</span>
 <svg style="left:474.6px;top:507.0px" width="8" height="8"><use href="#ipick"/></svg>
 <svg style="left:266.6px;top:503.6px" width="14" height="14"><defs><radialGradient id="rd"><stop offset="0" stop-color="#e01818"/><stop offset=".8" stop-color="#d01010"/><stop offset="1" stop-color="#a80c0c" stop-opacity=".6"/></radialGradient></defs><circle cx="7" cy="7" r="6.8" fill="url(#rd)"/></svg>
 <span class="t b" style="left:15.5px;top:518.6px;color:#bdbdbd;letter-spacing:0.18px;font-size:11px">A</span>
 <span class="t b" style="left:266.6px;top:518.6px;color:#bdbdbd;letter-spacing:0.3px;font-size:11px">64</span>
 <span class="t b" style="left:15.5px;top:535.6px;color:#bdbdbd;letter-spacing:0.18px;font-size:11px">B</span>
 <span class="t b" style="left:266.6px;top:535.6px;color:#bdbdbd;letter-spacing:0.3px;font-size:11px">64</span>
 <div class="sepline" style="top:551.5px;width:486px"></div>
 <svg style="left:3.2px;top:557.8px" width="10" height="9"><use href="#itrid"/></svg>
 <svg style="left:18.6px;top:554.6px" width="15" height="15" viewBox="0 0 15 15"><g transform="translate(1,1)"><use href="#idoc"/></g></svg>
 <svg style="left:36.2px;top:553.2px;overflow:visible" width="13" height="16" viewBox="0 -3 13 16"><use href="#icheckbox"/><use href="#icheck"/></svg>
 <span class="t b" style="left:52.3px;top:554.7px;color:#c3c3c3;letter-spacing:0.28px;font-size:11px">Lock Cursor (Script)</span>
 <svg style="left:449.5px;top:555.4px" width="13" height="13"><use href="#ihelp"/></svg>
 <svg style="left:467.2px;top:555.4px" width="14" height="11"><use href="#igear"/></svg>
 <span class="t b" style="left:15.5px;top:570.4px;color:#bdbdbd;letter-spacing:0.18px;font-size:11px">Script</span>
 <svg style="left:267.4px;top:569.8px" width="11" height="14"><use href="#ics"/></svg>
 <span class="t b" style="left:283.7px;top:570.4px;color:#bdbdbd;letter-spacing:0.3px;font-size:11px">lockCursor</span>
 <svg style="left:474.6px;top:574.4px" width="8" height="8"><use href="#ipick"/></svg>
 <span class="t b" style="left:15.5px;top:585.8px;color:#bdbdbd;letter-spacing:0.18px;font-size:11px">Lock Cursor</span>
 <svg style="left:267px;top:586.6px;overflow:visible" width="13" height="16" viewBox="0 -3 13 16"><use href="#icheckbox"/><use href="#icheck"/></svg>
 <div class="sepline" style="top:603.0px;width:486px"></div>
 <svg style="left:4.2px;top:609.5px" width="8" height="9"><use href="#itrir"/></svg>
 <svg style="left:18.6px;top:606.1px" width="15" height="15" viewBox="0 0 15 15"><g transform="translate(1,1)"><use href="#idoc"/></g></svg>
 <svg style="left:36.2px;top:604.7px;overflow:visible" width="13" height="16" viewBox="0 -3 13 16"><use href="#icheckbox"/><use href="#icheck"/></svg>
 <span class="t b" style="left:52.3px;top:606.2px;color:#c3c3c3;letter-spacing:0.28px;font-size:11px">Animation Camera (Script)</span>
 <svg style="left:449.5px;top:606.9px" width="13" height="13"><use href="#ihelp"/></svg>
 <svg style="left:467.2px;top:606.9px" width="14" height="11"><use href="#igear"/></svg>
</div>
<!--/INSP-->
</div>
<!--RED-->
<svg class="abs" style="left:0;top:0;pointer-events:none" width="1390" height="685" viewBox="0 0 1390 685" fill="none" stroke="#e21515" stroke-linecap="round" stroke-linejoin="round">
<path stroke-width="2.8" d="M14.6 390.9 C16.1 390.6 20.2 389.6 23.4 389.1 C26.6 388.6 27.8 388.2 33.6 388.0 C39.4 387.8 50.4 387.6 58.4 387.6 C66.4 387.6 75.5 387.8 81.8 388.0 C88.1 388.2 91.6 388.4 96.4 389.1 C101.2 389.8 105.6 391.0 110.9 392.4 C116.2 393.8 122.7 395.6 128.5 397.5 C134.3 399.4 140.7 402.0 146.0 404.1 C151.3 406.2 156.5 408.1 160.6 409.9 C164.7 411.7 168.0 413.1 170.8 415.0 C173.6 416.9 175.7 419.2 177.4 421.6 C179.1 424.0 179.9 426.8 181.0 429.6 C182.1 432.4 183.3 435.7 184.2 438.4 C185.1 441.1 186.0 442.8 186.6 445.7 C187.2 448.6 187.5 452.7 187.6 455.9 C187.7 459.1 187.3 463.2 187.2 464.7 L186.4 468.8  C184.5 468.6 180.7 467.9 175.2 467.6 C169.7 467.4 159.4 467.2 153.3 467.3 C147.2 467.4 143.6 467.4 138.7 467.9 C133.8 468.4 129.0 469.6 124.1 470.5 C119.2 471.4 114.4 472.5 109.5 473.4 C104.6 474.2 100.5 475.1 94.9 475.6 C89.3 476.1 82.0 476.5 75.9 476.6 C69.8 476.7 63.8 476.7 58.4 476.4 C53.0 476.1 48.2 475.6 43.8 474.9 C39.4 474.2 35.8 473.2 32.1 472.0 C28.5 470.8 24.8 469.3 21.9 467.6 C19.0 465.9 16.8 464.2 14.6 461.8 C12.4 459.4 10.5 456.2 8.8 453.0 C7.1 449.8 5.5 446.4 4.4 442.8 C3.3 439.2 2.6 435.0 2.2 431.1 C1.8 427.2 1.6 423.3 1.8 419.4 C2.0 415.5 2.4 411.1 3.2 407.7 C4.0 404.3 5.3 401.4 6.6 399.0 C7.9 396.6 9.6 394.8 10.9 393.4 C12.2 392.0 14.0 391.3 14.6 390.9"/>
<path stroke-width="2.6" d="M905.0 324.5 C906.1 324.4 908.9 324.1 911.9 324.1 C914.9 324.1 919.6 324.2 922.8 324.5 C926.0 324.8 928.1 325.1 930.9 325.9 C933.7 326.7 936.9 328.0 939.6 329.2 C942.3 330.4 944.5 331.7 946.9 333.2 C949.3 334.7 952.0 336.6 954.2 338.4 C956.4 340.2 958.6 342.4 960.1 344.2 C961.6 346.0 962.5 347.6 963.0 349.3 C963.5 351.0 963.9 352.9 963.4 354.4 C962.9 355.9 962.0 357.2 960.1 358.1 C958.2 359.0 955.2 359.2 952.0 359.5 C948.8 359.8 944.6 359.9 941.1 359.9 C937.6 359.9 934.2 359.9 930.9 359.5 C927.6 359.1 924.1 358.6 921.4 357.7 C918.7 356.8 916.9 355.7 914.8 354.4 C912.7 353.1 910.6 351.6 909.0 350.0 C907.4 348.4 906.1 346.7 905.3 344.9 C904.5 343.1 904.2 340.8 904.2 339.1 C904.2 337.4 904.5 335.9 905.3 334.7 C906.1 333.5 907.5 332.6 909.0 331.8 C910.5 331.0 912.3 330.2 914.1 329.6 C915.9 329.0 919.0 328.3 920.0 328.0"/>
<path stroke-width="2.3" d="M901.2 651.8 C902.7 651.4 906.1 651.0 909.7 650.8 C913.3 650.6 918.7 650.5 922.9 650.5 C927.1 650.5 931.7 650.3 934.7 650.8 C937.8 651.3 939.4 652.5 941.2 653.5 C943.1 654.5 943.9 656.1 945.8 657.1 C947.7 658.1 949.9 658.7 952.4 659.7 C954.9 660.7 958.5 661.6 961.0 663.0 C963.5 664.4 965.8 666.4 967.5 668.3 C969.2 670.2 970.9 672.5 971.5 674.2 C972.1 676.0 972.1 677.6 971.1 678.8 C970.1 679.9 968.2 680.6 965.6 681.1 C963.0 681.6 959.0 681.7 955.7 681.7 C952.4 681.7 949.1 681.5 945.8 681.1 C942.5 680.7 939.2 680.1 936.0 679.4 C932.8 678.7 929.9 677.6 926.8 676.8 C923.7 676.0 920.3 675.6 917.6 674.8 C914.9 674.0 912.4 673.4 910.4 672.2 C908.4 671.0 907.1 669.2 905.8 667.6 C904.5 666.0 903.6 664.0 902.8 662.3 C902.0 660.5 901.5 658.6 901.2 657.1 C900.9 655.6 900.8 654.0 900.8 653.1 C900.8 652.2 899.7 652.2 901.2 651.8"/>
</svg>
<!--/RED-->
</body>
</html>
